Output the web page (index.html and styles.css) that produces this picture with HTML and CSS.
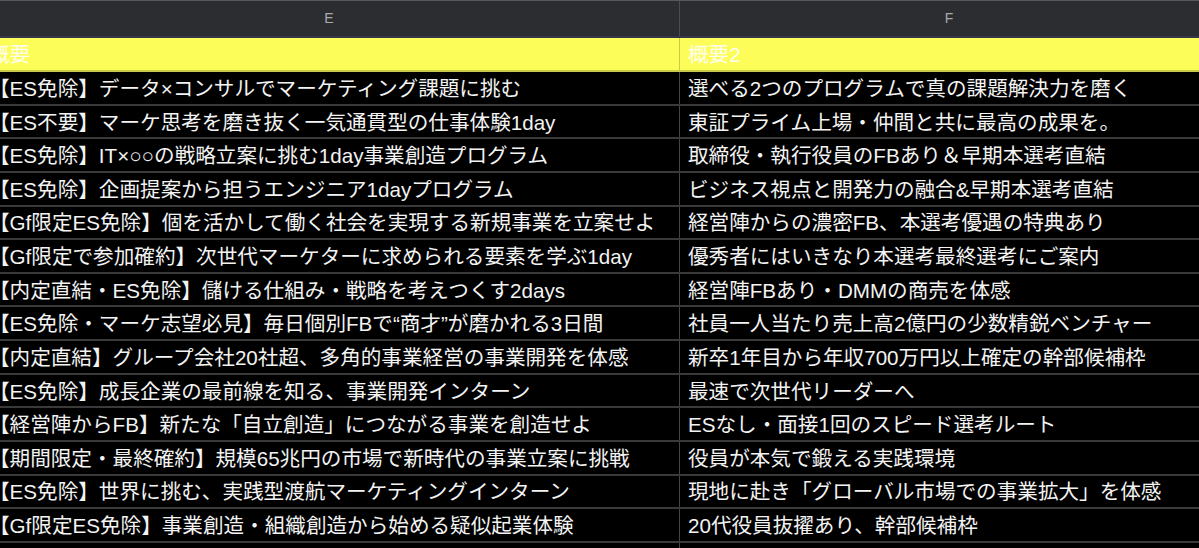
FILE: index.html
```html
<!DOCTYPE html>
<html lang="ja">
<head>
<meta charset="utf-8">
<link rel="stylesheet" href="styles.css">
</head>
<body>
<div class="sheet">
  <div class="row head">
    <div class="cell">E</div>
    <div class="cell">F</div>
  </div>
  <div class="row title">
    <div class="cell">概要</div>
    <div class="cell">概要2</div>
  </div>
  <div class="row"><div class="cell">【ES免除】データ×コンサルでマーケティング課題に挑む</div><div class="cell">選べる2つのプログラムで真の課題解決力を磨く</div></div>
  <div class="row"><div class="cell">【ES不要】マーケ思考を磨き抜く一気通貫型の仕事体験1day</div><div class="cell">東証プライム上場・仲間と共に最高の成果を。</div></div>
  <div class="row"><div class="cell">【ES免除】IT×○○の戦略立案に挑む1day事業創造プログラム</div><div class="cell">取締役・執行役員のFBあり＆早期本選考直結</div></div>
  <div class="row"><div class="cell">【ES免除】企画提案から担うエンジニア1dayプログラム</div><div class="cell">ビジネス視点と開発力の融合&amp;早期本選考直結</div></div>
  <div class="row"><div class="cell">【Gf限定ES免除】個を活かして働く社会を実現する新規事業を立案せよ</div><div class="cell">経営陣からの濃密FB、本選考優遇の特典あり</div></div>
  <div class="row"><div class="cell">【Gf限定で参加確約】次世代マーケターに求められる要素を学ぶ1day</div><div class="cell">優秀者にはいきなり本選考最終選考にご案内</div></div>
  <div class="row"><div class="cell">【内定直結・ES免除】儲ける仕組み・戦略を考えつくす2days</div><div class="cell">経営陣FBあり・DMMの商売を体感</div></div>
  <div class="row"><div class="cell">【ES免除・マーケ志望必見】毎日個別FBで“商才”が磨かれる3日間</div><div class="cell">社員一人当たり売上高2億円の少数精鋭ベンチャー</div></div>
  <div class="row"><div class="cell">【内定直結】グループ会社20社超、多角的事業経営の事業開発を体感</div><div class="cell">新卒1年目から年収700万円以上確定の幹部候補枠</div></div>
  <div class="row"><div class="cell">【ES免除】成長企業の最前線を知る、事業開発インターン</div><div class="cell">最速で次世代リーダーへ</div></div>
  <div class="row"><div class="cell">【経営陣からFB】新たな「自立創造」につながる事業を創造せよ</div><div class="cell">ESなし・面接1回のスピード選考ルート</div></div>
  <div class="row"><div class="cell">【期間限定・最終確約】規模65兆円の市場で新時代の事業立案に挑戦</div><div class="cell">役員が本気で鍛える実践環境</div></div>
  <div class="row"><div class="cell">【ES免除】世界に挑む、実践型渡航マーケティングインターン</div><div class="cell">現地に赴き「グローバル市場での事業拡大」を体感</div></div>
  <div class="row"><div class="cell">【Gf限定ES免除】事業創造・組織創造から始める疑似起業体験</div><div class="cell">20代役員抜擢あり、幹部候補枠</div></div>
  <div class="row"><div class="cell"></div><div class="cell"></div></div>
</div>
</body>
</html>
```

FILE: styles.css
```css
html, body {
  margin: 0;
  padding: 0;
  background: #000;
  overflow: hidden;
}

.sheet {
  margin-left: -21px;
  width: 1240px;
  font-family: "Liberation Sans", "Noto Sans CJK JP", sans-serif;
  color: #f3f3f3;
}

.row {
  display: grid;
  grid-template-columns: 701px 1fr;
  height: 33.64px;
  box-sizing: border-box;
  border-bottom: 2px solid #3a3a3a;
}

.cell {
  display: flex;
  align-items: center;
  padding-left: 10px;
  padding-top: 3px;
  font-size: 20.6px;
  line-height: 1.2;
  white-space: nowrap;
  border-right: 1px solid #444;
  box-sizing: border-box;
}

.row .cell + .cell {
  padding-left: 8px;
}

.row.head {
  height: 38px;
  background: #2c2d31;
  border-top: 1px solid #58585c;
  border-bottom: 2px solid #34344a;
}

.row.head .cell {
  justify-content: center;
  padding-left: 0;
  padding-top: 0;
  font-size: 14px;
  color: #a9a9ad;
  border-right: 1px solid #4c4c50;
}

.row.head .cell + .cell {
  padding-left: 0;
}

.row.title {
  height: 34px;
  background: #fdfd5a;
  border-bottom: 2px solid #c9c94a;
}

.row.title .cell {
  color: #ffffee;
  border-right: 1px solid #caca48;
}
```
